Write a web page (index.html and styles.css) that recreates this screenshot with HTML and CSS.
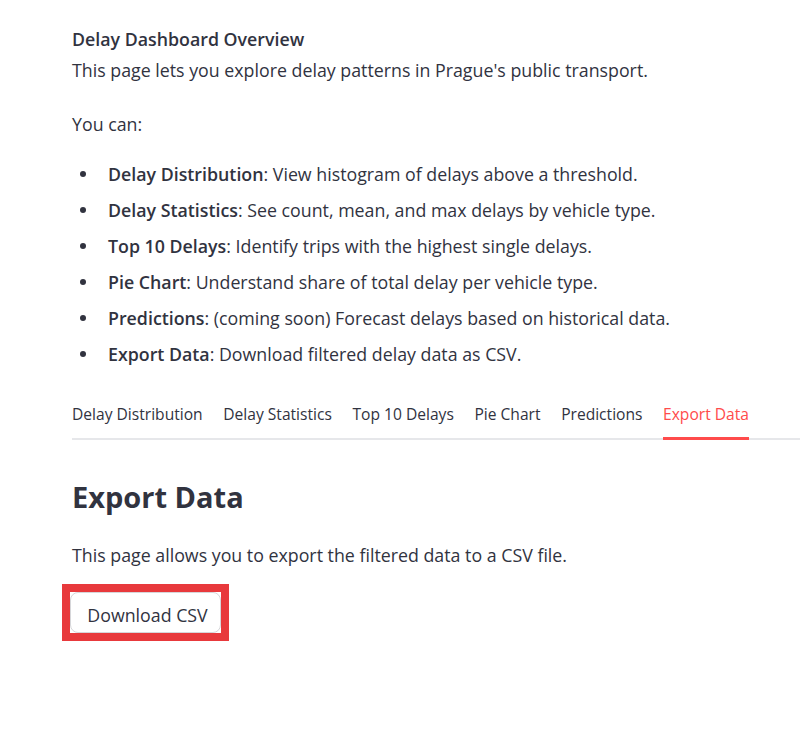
FILE: index.html
```
<!DOCTYPE html>
<html>
<head>
<meta charset="utf-8">
<link rel="stylesheet" href="styles.css">
</head>
<body>
<main class="main">
  <p class="title"><strong>Delay Dashboard Overview</strong></p>
  <p class="text intro">This page lets you explore delay patterns in Prague's public transport.</p>
  <p class="text cando">You can:</p>
  <ul class="features">
    <li><strong>Delay Distribution</strong>: View histogram of delays above a threshold.</li>
    <li><strong>Delay Statistics</strong>: See count, mean, and max delays by vehicle type.</li>
    <li><strong>Top 10 Delays</strong>: Identify trips with the highest single delays.</li>
    <li><strong>Pie Chart</strong>: Understand share of total delay per vehicle type.</li>
    <li><strong>Predictions</strong>: (coming soon) Forecast delays based on historical data.</li>
    <li><strong>Export Data</strong>: Download filtered delay data as CSV.</li>
  </ul>
  <div class="tabs">
    <span class="tab">Delay Distribution</span>
    <span class="tab">Delay Statistics</span>
    <span class="tab">Top 10 Delays</span>
    <span class="tab">Pie Chart</span>
    <span class="tab">Predictions</span>
    <span class="tab active">Export Data</span>
  </div>
  <h2 class="heading">Export Data</h2>
  <p class="text export-text">This page allows you to export the filtered data to a CSV file.</p>
  <div class="btn-wrap">
    <div class="highlight">
      <button class="btn">Download CSV</button>
    </div>
  </div>
</main>
</body>
</html>
```
FILE: styles.css
```
html, body {
  margin: 0;
  padding: 0;
  background: #ffffff;
}
body {
  font-family: "Open Sans", "Noto Sans", sans-serif;
  color: #31333f;
  font-size: 17.8px;
}
.main {
  padding: 26px 0 0 72px;
}
p { margin: 0; }
strong { font-weight: 600; }
.title {
  line-height: 26px;
}
.text {
  line-height: 26px;
}
.intro { margin-top: 5px; }
.cando { margin-top: 28px; }
.features {
  margin: 24px 0 0 0;
  padding: 0;
  list-style: none;
}
.features li {
  position: relative;
  padding-left: 36px;
  line-height: 26px;
  margin-bottom: 10px;
}
.features li::before {
  content: "";
  position: absolute;
  left: 8px;
  top: 10px;
  width: 6px;
  height: 6px;
  border-radius: 50%;
  background: #31333f;
}
.features li:last-child { margin-bottom: 0; }
.tabs {
  margin-top: 35px;
  display: flex;
  gap: 20.6px;
  border-bottom: 2px solid #e6e7ea;
  font-size: 15.6px;
}
.tab {
  line-height: 24px;
  padding-bottom: 11px;
  margin-bottom: -2px;
  border-bottom: 3px solid transparent;
}
.tab.active {
  color: #ff4b4b;
  border-bottom-color: #ff4b4b;
}
.heading {
  margin: 35px 0 0 0;
  font-size: 29px;
  font-weight: 700;
  line-height: 44px;
}
.export-text { margin-top: 23px; }
.btn-wrap {
  margin-top: 16px;
  margin-left: -10px;
}
.highlight {
  display: inline-block;
  border: 8px solid #e8393c;
  line-height: 0;
}
.btn {
  font-family: inherit;
  font-size: 17.8px;
  color: #31333f;
  background: #ffffff;
  border: 1px solid #d6d6d9;
  border-radius: 8px;
  height: 41px;
  width: 151px;
  padding: 4px 8px 0 12px;
  margin: 0;
}
```
